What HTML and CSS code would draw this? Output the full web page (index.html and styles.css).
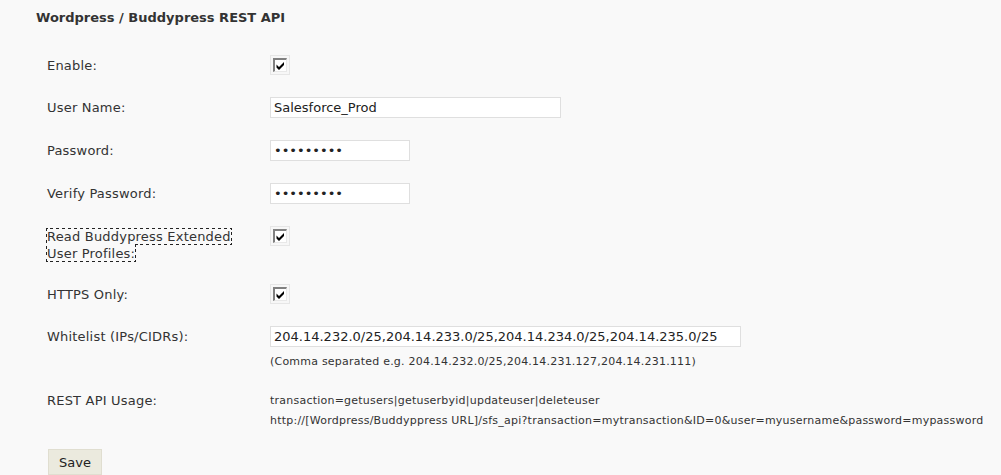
FILE: index.html
```html
<!DOCTYPE html>
<html>
<head>
<meta charset="utf-8">
<link rel="stylesheet" href="styles.css">
</head>
<body>
<div class="wrap">
  <h3 class="title">Wordpress / Buddypress REST API</h3>
  <form class="form">
    <div class="row row-check">
      <label class="lbl">Enable:</label>
      <span class="cb"><span class="cb-box"><svg width="11" height="11" viewBox="0 0 11 11"><path d="M1.5 4.5 L4 7 L9 2 L9 5 L4 10 L1.5 7.5 Z" fill="#000"/></svg></span></span>
    </div>
    <div class="row">
      <label class="lbl">User Name:</label>
      <input class="txt txt-name" type="text" value="Salesforce_Prod">
    </div>
    <div class="row">
      <label class="lbl">Password:</label>
      <input class="txt txt-pw" type="password" value="xxxxxxxxx">
    </div>
    <div class="row">
      <label class="lbl">Verify Password:</label>
      <input class="txt txt-pw" type="password" value="xxxxxxxxx">
    </div>
    <div class="row row-check">
      <label class="lbl lbl-multi"><span class="focus">Read Buddypress Extended User Profiles:</span></label>
      <span class="cb"><span class="cb-box"><svg width="11" height="11" viewBox="0 0 11 11"><path d="M1.5 4.5 L4 7 L9 2 L9 5 L4 10 L1.5 7.5 Z" fill="#000"/></svg></span></span>
    </div>
    <div class="row row-check">
      <label class="lbl">HTTPS Only:</label>
      <span class="cb"><span class="cb-box"><svg width="11" height="11" viewBox="0 0 11 11"><path d="M1.5 4.5 L4 7 L9 2 L9 5 L4 10 L1.5 7.5 Z" fill="#000"/></svg></span></span>
    </div>
    <div class="row">
      <label class="lbl">Whitelist (IPs/CIDRs):</label>
      <div class="field">
        <input class="txt txt-wide" type="text" value="204.14.232.0/25,204.14.233.0/25,204.14.234.0/25,204.14.235.0/25">
        <div class="hint">(Comma separated e.g. 204.14.232.0/25,204.14.231.127,204.14.231.111)</div>
      </div>
    </div>
    <div class="row row-usage">
      <label class="lbl">REST API Usage:</label>
      <div class="usage">
        <div>transaction=getusers|getuserbyid|updateuser|deleteuser</div>
        <div>http://[Wordpress/Buddyppress URL]/sfs_api?transaction=mytransaction&amp;ID=0&amp;user=myusername&amp;password=mypassword</div>
      </div>
    </div>
    <div class="actions">
      <button class="btn" type="button">Save</button>
    </div>
  </form>
</div>
</body>
</html>
```

FILE: styles.css
```css
html, body {
  margin: 0;
  padding: 0;
  background: #f9f9f9;
}
body {
  font-family: Verdana, "DejaVu Sans", sans-serif;
  font-size: 13px;
  color: #333;
}
.wrap {
  padding: 8px 0 0 36px;
}
.title {
  margin: 0;
  font-size: 13px;
  font-weight: bold;
  line-height: 20px;
  color: #333;
}
.form {
  display: flex;
  flex-direction: column;
  gap: 22px;
  padding: 27px 0 0 11px;
  margin: 0;
}
.row {
  display: grid;
  grid-template-columns: 223px 1fr;
  align-items: start;
}
.lbl {
  line-height: 21px;
  color: #333;
  letter-spacing: 0.2px;
}
.row-check .lbl {
  line-height: 18px;
  padding-top: 2px;
}
.row-check .lbl.lbl-multi {
  line-height: 17px;
  padding-top: 2px;
  width: 190px;
}
.focus {
  outline: 1px dotted #222;
}
.cb {
  display: inline-flex;
  align-items: center;
  justify-content: center;
  width: 18px;
  height: 18px;
  border: 1px solid #e6e6e6;
  background: #f7f7f7;
}
.cb-box {
  display: flex;
  align-items: center;
  justify-content: center;
  width: 11px;
  height: 11px;
  border-top: 2px solid #808080;
  border-left: 2px solid #808080;
  border-right: 1px solid #e8e8e8;
  border-bottom: 1px solid #e8e8e8;
  background: #fff;
}
.cb-box svg {
  display: block;
}
.txt {
  box-sizing: border-box;
  height: 21px;
  border: 1px solid #dfdfdf;
  background: #fff;
  font-family: Verdana, "DejaVu Sans", sans-serif;
  font-size: 13px;
  color: #222;
  padding: 0 3px;
  margin: 0;
  outline: none;
  display: block;
}
.txt-name { width: 291px; }
.txt-pw { width: 140px; }
.txt-wide { width: 471px; }
.hint {
  font-size: 11px;
  line-height: 14px;
  margin-top: 8px;
  color: #333;
  letter-spacing: 0.22px;
}
.row-usage .lbl {
  line-height: 20px;
}
.usage {
  font-size: 11px;
  line-height: 20px;
  color: #333;
  letter-spacing: 0.23px;
}
.actions {
  margin-top: -4px;
}
.btn {
  font-family: Verdana, "DejaVu Sans", sans-serif;
  font-size: 13px;
  color: #222;
  background: #ebeade;
  border: 1px solid #e0ded0;
  width: 54px;
  height: 26px;
  padding: 0;
  margin-left: 1px;
}
```
